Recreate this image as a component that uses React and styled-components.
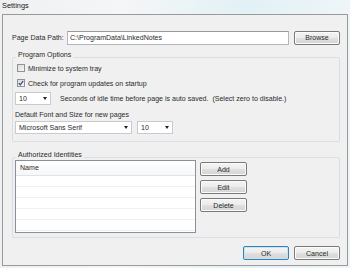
import React from 'react';
import styled, { createGlobalStyle } from 'styled-components';

const GlobalStyle = createGlobalStyle`
  html, body {
    margin: 0;
    padding: 0;
  }
  body {
    width: 350px;
    height: 268px;
    overflow: hidden;
    font-family: "Liberation Sans", Arial, sans-serif;
    font-size: 7.05px;
    color: #2a2a2a;
  }
`;

const Frame = styled.div`
  width: 350px;
  height: 268px;
  display: flex;
  flex-direction: column;
  background: linear-gradient(90deg, #eef0f2 0%, #f5f6f7 35%, #e2f1f5 70%, #eef5f8 100%);
`;

const TitleBar = styled.div`
  height: 14px;
  padding-left: 2px;
  line-height: 12px;
  font-size: 7.4px;
  color: #1a1a1a;
`;

const Panel = styled.div`
  box-sizing: border-box;
  height: 252px;
  margin: 0 2px;
  padding: 15px 7px 0 9px;
  background: #f0f0f0;
  border: 1px solid #9a9a9a;
  display: flex;
  flex-direction: column;
`;

const PathRow = styled.div`
  display: flex;
  align-items: center;
  height: 15px;
`;

const Label = styled.span`
  width: ${p => p.$width || 'auto'};
  flex-shrink: 0;
  white-space: nowrap;
`;

const TextBox = styled.div`
  flex: 1;
  box-sizing: border-box;
  height: 14px;
  margin-right: 5px;
  padding-left: 2px;
  line-height: 12px;
  background: #fff;
  border: 1px solid #b4b6bb;
  border-top-color: #989aa0;
`;

const Button = styled.button`
  box-sizing: border-box;
  width: ${p => p.$width || 46}px;
  height: 14px;
  padding: 0;
  font: inherit;
  color: #2a2a2a;
  border: 1px solid ${p => (p.$default ? '#3c7fb1' : '#7a7a7a')};
  border-radius: 2px;
  background: linear-gradient(#f4f4f4 0%, #ececec 48%, #e0e0e0 52%, #d4d4d4 100%);
  box-shadow: inset 0 0 0 1px ${p => (p.$default ? '#c4e5f6' : '#fbfbfb')};
`;

const Group = styled.fieldset`
  margin: ${p => p.$top}px 0 0 0;
  padding: 0 0 ${p => p.$bottom}px 2px;
  min-inline-size: 0;
  width: 328px;
  box-sizing: border-box;
  border: 1px solid #d5dfe5;
  border-radius: 2px;
  display: flex;
  flex-direction: column;
`;

const Legend = styled.legend`
  margin-left: 1px;
  padding: 0 2px 6px 2px;
  line-height: 9px;
  color: #2a2a2a;
`;

const CheckRow = styled.div`
  display: flex;
  align-items: center;
  height: 12px;
  margin-top: ${p => p.$top}px;
  padding-left: 2px;
`;

const CheckBox = styled.span`
  box-sizing: border-box;
  width: 8px;
  height: 8px;
  margin-right: 3px;
  border: 1px solid #929292;
  background: linear-gradient(135deg, #dcdcdc, #f6f6f6);
  display: flex;
  align-items: center;
  justify-content: center;
`;

const ComboRow = styled.div`
  display: flex;
  align-items: center;
  gap: ${p => p.$gap || 5}px;
  height: 13px;
  margin-top: ${p => p.$top}px;
`;

const Combo = styled.div`
  box-sizing: border-box;
  width: ${p => p.$width}px;
  height: 13px;
  padding: 0 3px 0 3px;
  display: flex;
  align-items: center;
  justify-content: space-between;
  background: #fff;
  border: 1px solid #c8cacf;
`;

const Arrow = styled.span`
  width: 0;
  height: 0;
  border-left: 2.5px solid transparent;
  border-right: 2.5px solid transparent;
  border-top: 3px solid #222;
`;

const Caption = styled.div`
  height: 10px;
  line-height: 10px;
  margin-top: 5px;
`;

const IdentityRow = styled.div`
  display: flex;
  gap: 4px;
  margin-top: -5px;
`;

const ListView = styled.div`
  box-sizing: border-box;
  width: 181px;
  height: 73px;
  background: #fff;
  border: 1px solid #8a8f98;
  display: flex;
  flex-direction: column;
`;

const ListHeader = styled.div`
  height: 15px;
  line-height: 14px;
  padding-left: 4px;
  box-sizing: border-box;
  border-bottom: 1px solid #e2e3e6;
  background: linear-gradient(#ffffff, #f6f7f9);
`;

const ListBody = styled.div`
  flex: 1;
  background: repeating-linear-gradient(#fff 0px, #fff 10px, #f0f0f0 10px, #f0f0f0 11px);
`;

const ButtonColumn = styled.div`
  display: flex;
  flex-direction: column;
  gap: 4px;
  padding-top: 2px;
`;

const Footer = styled.div`
  display: flex;
  justify-content: flex-end;
  gap: 5px;
  margin-top: 8px;
`;

const Check = () => (
  <svg width="6" height="6" viewBox="0 0 6 6">
    <path d="M0.8 3.2 L2.3 4.8 L5.2 0.9" fill="none" stroke="#34478a" strokeWidth="1.2" />
  </svg>
);

export default function App() {
  return (
    <>
      <GlobalStyle />
      <Frame>
        <TitleBar>Settings</TitleBar>
        <Panel>
          <PathRow>
            <Label $width="55px">Page Data Path:</Label>
            <TextBox>C:\ProgramData\LinkedNotes</TextBox>
            <Button>Browse</Button>
          </PathRow>

          <Group $top={5} $bottom={7}>
            <Legend>Program Options</Legend>
            <CheckRow $top={-3}>
              <CheckBox />
              <Label>Minimize to system tray</Label>
            </CheckRow>
            <CheckRow $top={3}>
              <CheckBox>
                <Check />
              </CheckBox>
              <Label>Check for program updates on startup</Label>
            </CheckRow>
            <ComboRow $top={3} $gap={9}>
              <Combo $width={36}>
                <span>10</span>
                <Arrow />
              </Combo>
              <Label>Seconds of idle time before page is auto saved.&nbsp; (Select zero to disable.)</Label>
            </ComboRow>
            <Caption>Default Font and Size for new pages</Caption>
            <ComboRow $top={1}>
              <Combo $width={117}>
                <span>Microsoft Sans Serif</span>
                <Arrow />
              </Combo>
              <Combo $width={36}>
                <span>10</span>
                <Arrow />
              </Combo>
            </ComboRow>
          </Group>

          <Group $top={8} $bottom={4}>
            <Legend>Authorized Identities</Legend>
            <IdentityRow>
              <ListView>
                <ListHeader>Name</ListHeader>
                <ListBody />
              </ListView>
              <ButtonColumn>
                <Button $width={47}>Add</Button>
                <Button $width={47}>Edit</Button>
                <Button $width={47}>Delete</Button>
              </ButtonColumn>
            </IdentityRow>
          </Group>

          <Footer>
            <Button $default>OK</Button>
            <Button>Cancel</Button>
          </Footer>
        </Panel>
      </Frame>
    </>
  );
}
